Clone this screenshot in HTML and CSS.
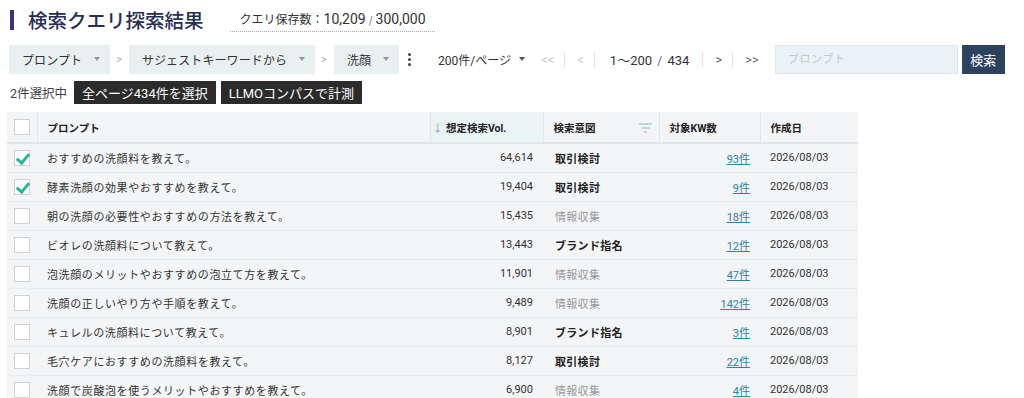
FILE: index.html
```html
<!DOCTYPE html>
<html lang="ja">
<head>
	<meta charset="UTF-8">
	<title>検索クエリ探索結果</title>
	<link rel="stylesheet" href="styles.css">
</head>
<body>
	<div id="page">
		<div class="head">
			<h1 class="title">検索クエリ探索結果</h1>
			<div class="quota">クエリ保存数：<b>10,209</b><span class="sl">/</span><b>300,000</b></div>
		</div>

		<div class="toolbar">
			<div class="select">プロンプト<i class="caret"></i></div>
			<span class="gt">&gt;</span>
			<div class="select">サジェストキーワードから<i class="caret"></i></div>
			<span class="gt">&gt;</span>
			<div class="select">洗顔<i class="caret"></i></div>
			<span class="kebab"><i></i><i></i><i></i></span>
			<div class="perpage">200件/ページ<i class="caret dark"></i></div>
			<div class="pager">
				<span class="off">&lt;&lt;</span><span class="bar"></span>
				<span class="off">&lt;</span><span class="bar"></span>
				<span class="range">1～200 <small>/</small> 434</span><span class="bar"></span>
				<span class="on">&gt;</span><span class="bar"></span>
				<span class="on">&gt;&gt;</span>
			</div>
			<input class="search" type="text" placeholder="プロンプト">
			<button class="btn-search">検索</button>
		</div>

		<div class="selbar">
			<span class="count">2件選択中</span>
			<button class="dark-btn">全ページ434件を選択</button>
			<button class="dark-btn">LLMOコンパスで計測</button>
		</div>

		<table class="grid">
			<colgroup>
				<col style="width:30px"><col style="width:393px"><col style="width:113px">
				<col style="width:116px"><col style="width:101px"><col style="width:98px">
			</colgroup>
			<thead>
				<tr>
					<th class="cb"><span class="box"></span></th>
					<th>プロンプト</th>
					<th class="sorted"><span class="arrow">↓</span>想定検索Vol.</th>
					<th class="intent">検索意図
						<svg class="filter" width="13" height="10" viewBox="0 0 13 10"><path d="M0 1h13M2.5 5h8M5 9h3" stroke="#7fb9c4" stroke-width="1.2"/></svg>
					</th>
					<th>対象KW数</th>
					<th>作成日</th>
				</tr>
			</thead>
			<tbody id="rows"></tbody>
		</table>
	</div>

	<script>
		var data = [
			["おすすめの洗顔料を教えて。","64,614","取引検討","93件",1],
			["酵素洗顔の効果やおすすめを教えて。","19,404","取引検討","9件",1],
			["朝の洗顔の必要性やおすすめの方法を教えて。","15,435","情報収集","18件",0],
			["ビオレの洗顔料について教えて。","13,443","ブランド指名","12件",0],
			["泡洗顔のメリットやおすすめの泡立て方を教えて。","11,901","情報収集","47件",0],
			["洗顔の正しいやり方や手順を教えて。","9,489","情報収集","142件",0],
			["キュレルの洗顔料について教えて。","8,901","ブランド指名","3件",0],
			["毛穴ケアにおすすめの洗顔料を教えて。","8,127","取引検討","22件",0],
			["洗顔で炭酸泡を使うメリットやおすすめを教えて。","6,900","情報収集","4件",0]
		];
		var html = "";
		for(var i=0;i<data.length;i++){
			var d = data[i];
			var weak = d[2]=="情報収集" ? " weak" : "";
			html += "<tr><td class='cb'><span class='box"+(d[4]?" checked":"")+"'></span></td>"
				+"<td>"+d[0]+"</td><td class='num'>"+d[1]+"</td>"
				+"<td class='tag"+weak+"'>"+d[2]+"</td>"
				+"<td class='num'><a href='javascript:void(0);'>"+d[3]+"</a></td>"
				+"<td class='date'>2026/08/03</td></tr>";
		}
		document.getElementById("rows").innerHTML = html;
	</script>
</body>
</html>
```

FILE: styles.css
```css
*{padding:0;margin:0;box-sizing:border-box;}
body{font-family:Roboto,"Noto Sans CJK JP",sans-serif;color:#333;background:#fff;}
a{text-decoration:underline;color:#2b82aa;}
button{font-family:inherit;border:0;cursor:pointer;}

#page{padding:10px 0 0 7px;}

.head{display:flex;align-items:flex-start;height:34px;}
.title{font-family:"Noto Sans CJK JP",sans-serif;font-size:19.5px;font-weight:500;color:#272e58;line-height:20px;border-left:4px solid #3a3382;padding-left:14px;margin-left:3px;}
.quota{margin-left:26px;margin-top:-1px;padding:0 9px 2px 10px;border-bottom:1px dotted #9fb2bb;font-family:"Noto Sans CJK JP",sans-serif;font-size:12px;color:#333;height:23px;line-height:20px;}
.quota b{font-family:Roboto,sans-serif;font-weight:400;font-size:14px;}
.quota .sl{font-size:10px;color:#666;margin:0 3px;}

.toolbar{display:flex;align-items:center;height:30px;}
.select{height:29px;background:#e8f0f2;display:flex;align-items:center;padding:0 10px 0 13px;font-size:12px;color:#333;letter-spacing:0.1px;margin-left:2px;}
.caret{display:inline-block;width:0;height:0;border-left:3.5px solid transparent;border-right:3.5px solid transparent;border-top:4px solid #8e9699;margin-left:12px;}
.caret.dark{border-top-color:#555;margin-left:8px;}
.gt{color:#aaa;font-size:11px;margin:0 5px 0 6px;}
.kebab{display:flex;flex-direction:column;gap:2px;margin-left:9px;}
.kebab i{display:block;width:3px;height:3px;border-radius:50%;background:#444;}
.perpage{font-size:12px;color:#333;margin-left:27px;display:flex;align-items:center;}
.pager{display:flex;align-items:center;margin-left:16px;font-size:13px;}
.pager .off{color:#c8c8c8;}
.pager .on{color:#666;}
.pager .bar{display:inline-block;width:1px;height:15px;background:#e2e2e2;margin:0 12px 0 10px;}
.pager .range{color:#333;margin:0 3px;}
.pager .range small{font-size:12px;color:#666;margin:0 2px;}
.search{margin-left:16px;width:183px;height:29px;background:#e9f2f4;border:1px solid #dde9ec;padding:0 12px;font-size:11px;font-family:inherit;outline:none;}
.search::placeholder{color:#c3c9cb;letter-spacing:0.6px;}
.btn-search{margin-left:4px;width:43px;height:29px;background:#2c4261;color:#fff;font-size:13px;}

.selbar{display:flex;align-items:center;margin-top:7px;height:23px;}
.count{font-size:12.5px;color:#444;margin-left:3px;}
.dark-btn{height:23px;background:#2b2b2b;color:#fff;font-size:13px;padding:0 8px;margin-left:7px;}
.dark-btn + .dark-btn{margin-left:5px;}

.grid{margin-top:8px;border-collapse:collapse;table-layout:fixed;width:851px;background:#f4f5f7;font-size:11px;}
.grid th{height:31px;text-align:left;font-weight:700;font-size:10.5px;color:#222;padding:0 10px;border-left:1px solid #e3e6ea;border-bottom:2px solid #e1e4e8;}
.grid th:first-child{border-left:0;}
.grid th.sorted{background:#e9f4f5;padding-left:2px;}
.grid th .arrow{color:#999;font-weight:400;margin-right:3px;}
.grid th.intent{position:relative;}
.grid .filter{position:absolute;right:7px;top:11px;}
.grid td{height:29px;padding:0 10px;border-bottom:1px solid #e9ebee;color:#333;letter-spacing:0.6px;white-space:nowrap;}
.grid td.num{text-align:right;letter-spacing:0;}
.grid td.tag{font-weight:700;color:#222;padding-left:12px;letter-spacing:0.3px;}
.grid td.tag.weak{font-weight:400;color:#999;}
.grid td.date{letter-spacing:0;}
.grid .cb{padding:0 0 0 7px;}
.box{display:block;width:16px;height:16px;background:#fff;border:1px solid #cfd3d6;position:relative;}
.box.checked::after{content:"";position:absolute;left:4px;top:0px;width:5px;height:10px;border:solid #2bb39b;border-width:0 3px 3px 0;transform:rotate(40deg);}
```
